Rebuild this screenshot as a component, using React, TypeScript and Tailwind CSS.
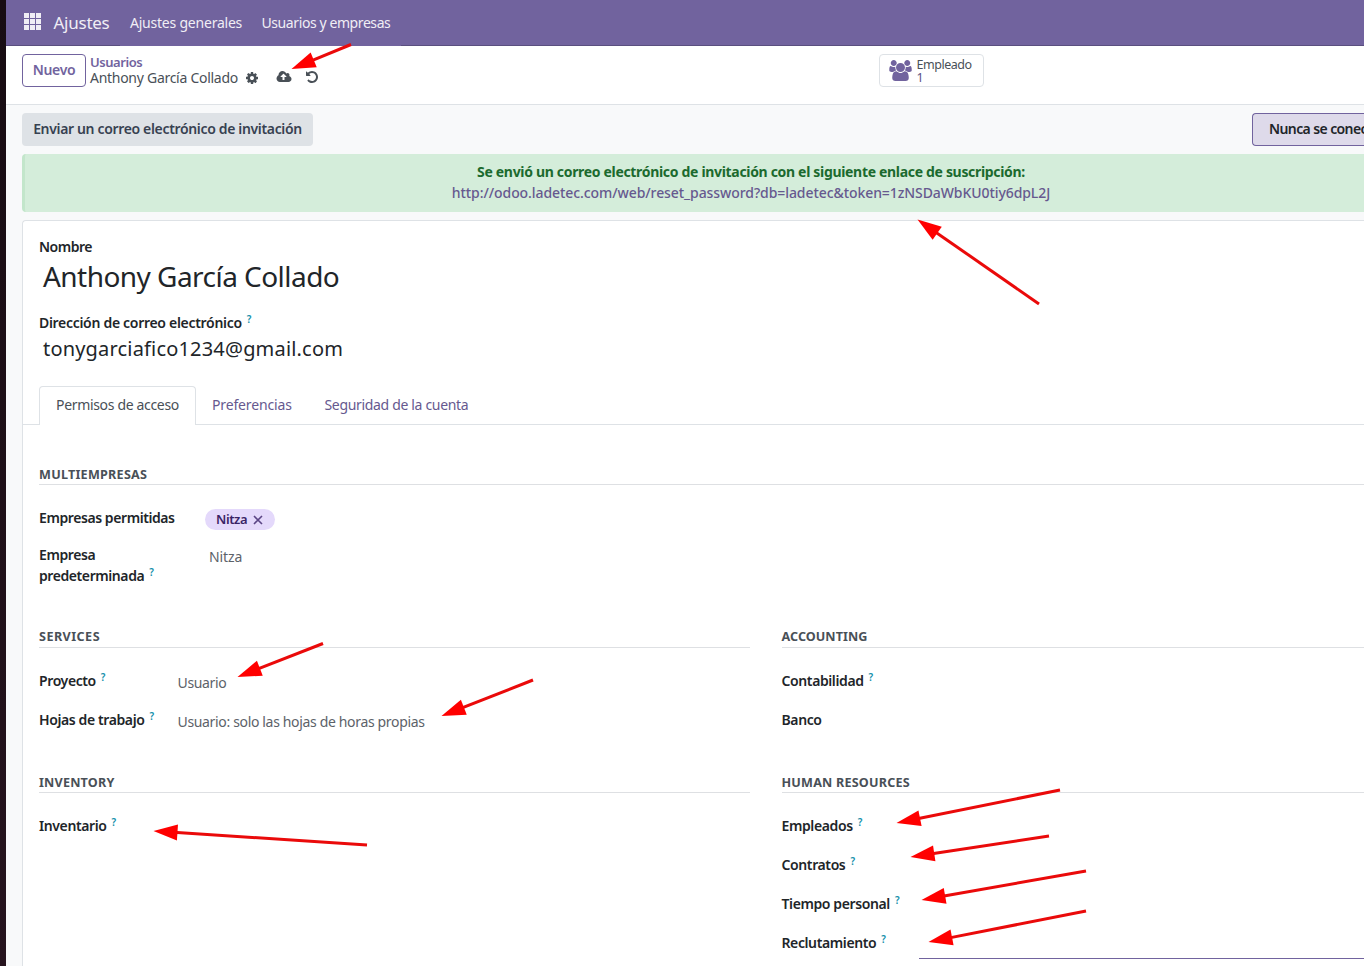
import type { ReactNode } from "react";

const PATHS = {
  users:
    "M593 896q-162 5-265 128h-134q-82 0-138-40.5t-56-118.5q0-353 124-353 6 0 43.5 21t97.5 42.5 119 21.5q67 0 133-23-5 37-5 66 0 139 81 256zm1071 637q0 120-73 189.5t-194 69.5h-874q-121 0-194-69.5t-73-189.5q0-53 3.5-103.5t14-109 26.5-108.5 43-97.5 62-81 85.5-53.5 111.5-20q10 0 43 21.5t73 48 107 48 135 21.5 135-21.5 107-48 73-48 43-21.5q61 0 111.5 20t85.5 53.5 62 81 43 97.5 26.5 108.5 14 109 3.5 103.5zm-1024-1277q0 106-75 181t-181 75-181-75-75-181 75-181 181-75 181 75 75 181zm704 384q0 159-112.5 271.5t-271.5 112.5-271.5-112.5-112.5-271.5 112.5-271.5 271.5-112.5 271.5 112.5 112.5 271.5zm576 225q0 78-56 118.5t-138 40.5h-134q-103-123-265-128 81-117 81-256 0-29-5-66 66 23 133 23 59 0 119-21.5t97.5-42.5 43.5-21q124 0 124 353zm-128-609q0 106-75 181t-181 75-181-75-75-181 75-181 181-75 181 75 75 181z",
  cog: "M1152 896q0-106-75-181t-181-75-181 75-75 181 75 181 181 75 181-75 75-181zm512-109v222q0 12-8 23t-20 13l-185 28q-19 54-39 91 35 50 107 138 10 12 10 25t-9 23q-27 37-99 108t-94 71q-12 0-26-9l-138-108q-44 23-91 38-16 136-29 186-7 28-36 28h-222q-14 0-24.5-8.5t-11.5-21.5l-28-184q-49-16-90-37l-141 107q-10 9-25 9-14 0-25-11-126-114-165-168-7-10-7-23 0-12 8-23 15-21 51-66.5t54-70.5q-27-50-41-99l-183-27q-13-2-21-12.5t-8-23.5v-222q0-12 8-23t19-13l186-28q14-46 39-92-40-57-107-138-10-12-10-24 0-10 9-23 26-36 98.5-107.5t94.5-71.5q13 0 26 10l138 107q44-23 91-38 16-136 29-186 7-28 36-28h222q14 0 24.5 8.5t11.5 21.5l28 184q49 16 90 37l142-107q9-9 24-9 13 0 25 10 129 119 165 170 7 8 7 22 0 12-8 23-15 21-51 66.5t-54 70.5q26 50 41 98l183 28q13 2 21 12.5t8 23.5z",
  cloud:
    "M1280 864q0-14-9-23l-352-352q-9-9-23-9t-23 9l-351 351q-10 12-10 24 0 14 9 23t23 9h224v352q0 13 9.5 22.5t22.5 9.5h192q13 0 22.5-9.5t9.5-22.5v-352h224q13 0 22.5-9.5t9.5-22.5zm640 288q0 159-112.5 271.5t-271.5 112.5h-1088q-185 0-316.5-131.5t-131.5-316.5q0-130 70-240t188-165q-2-30-2-43 0-212 150-362t362-150q156 0 285.5 87t188.5 231q71-62 166-62 106 0 181 75t75 181q0 76-41 138 130 31 213.5 135.5t83.5 238.5z",
  undo: "M1664 896q0 156-61 298t-164 245-245 164-298 61q-172 0-327-72.5t-264-204.5q-7-10-6.5-22.5t8.5-20.5l137-138q10-9 25-9 16 2 23 12 73 95 179 147t225 52q104 0 198.5-40.5t163.5-109.5 109.5-163.5 40.5-198.5-40.5-198.5-109.5-163.5-163.5-109.5-198.5-40.5q-98 0-188 35.5t-160 101.5l137 138q31 30 14 69-17 40-59 40h-448q-26 0-45-19t-19-45v-448q0-42 40-59 39-17 69 14l130 129q107-101 244.5-156.5t284.5-55.5q156 0 298 61t245 164 164 245 61 298z",
};

function Icon({ name, width = 1792, className }: { name: keyof typeof PATHS; width?: number; className: string }) {
  return (
    <svg viewBox={`0 0 ${width} 1792`} fill="currentColor" className={`shrink-0 ${className}`}>
      <path d={PATHS[name]} />
    </svg>
  );
}

function Help() {
  return <sup className="relative -top-[5px] ml-[5px] align-baseline text-[10px] leading-none font-semibold text-[#1490ab]">?</sup>;
}

function Heading({ children, className = "leading-[18px] tracking-[0.2px]" }: { children: ReactNode; className?: string }) {
  return (
    <h2 className={`h-[20px] border-b border-[#dee0e3] text-[12.6px] font-bold text-[#495057] ${className}`}>
      {children}
    </h2>
  );
}

function Field({ label, help, children }: { label: string; help?: boolean; children?: ReactNode }) {
  return (
    <div className="flex h-[39px]">
      <div className="w-[138.5px] shrink-0 text-[14px] leading-[21px] font-semibold tracking-[-0.39px] whitespace-nowrap text-[#212529]">
        {label}
        {help && <Help />}
      </div>
      <div className="pt-[2px] text-[14px] leading-[21px] tracking-[-0.34px] whitespace-nowrap text-[#5c6269]">{children}</div>
    </div>
  );
}

const ARROWS = [
  [291.5, 69, 351, 44.5],
  [917.5, 219.5, 1039, 304],
  [237.5, 677, 323, 643.5],
  [441.5, 716, 533, 680],
  [153.5, 831, 367, 845],
  [896.5, 823, 1060, 790],
  [910.5, 857, 1049, 836],
  [921.5, 900, 1086, 871],
  [928.5, 942, 1086, 911],
];

function Arrows() {
  return (
    <svg className="pointer-events-none absolute inset-0 h-[966px] w-[1364px]" viewBox="0 0 1364 966">
      {ARROWS.map(([x, y, tx, ty]) => {
        const angle = (Math.atan2(ty - y, tx - x) * 180) / Math.PI;
        const length = Math.hypot(tx - x, ty - y);
        return (
          <g key={`${x}-${y}`} transform={`translate(${x} ${y}) rotate(${angle})`}>
            <path d={`M20 0H${length}`} stroke="#ea0a0a" strokeWidth="3" />
            <path d="M0 0L24 -8V8Z" fill="#ff0000" />
          </g>
        );
      })}
    </svg>
  );
}

export default function App() {
  return (
    <div className="relative flex h-[966px] w-[1364px] overflow-hidden bg-[#f8f9fa] font-['Noto_Sans',sans-serif] text-[14px] text-[#212529]">
      <div className="w-[6px] shrink-0 bg-linear-to-b from-[#170c12] to-[#26141e]" />
      <div className="min-w-0 flex-1">
        <header className="flex h-[46px] flex-col bg-[#71639e] whitespace-nowrap text-[#f0eef5]">
          <div className="flex h-[45px] items-center pl-[18px]">
            <svg viewBox="0 0 17 17" className="mb-[2px] h-[17px] w-[17px]" fill="currentColor">
              {[0, 6, 12].map((y) => [0, 6, 12].map((x) => <rect key={`${x}${y}`} x={x} y={y} width="5" height="5" />))}
            </svg>
            <span className="ml-[12.5px] w-[76.5px] text-[17px] tracking-[-0.25px]">Ajustes</span>
            <span className="w-[131.5px] tracking-[-0.22px]">Ajustes generales</span>
            <span className="tracking-[-0.41px]">Usuarios y empresas</span>
          </div>
          <div className="flex h-px justify-between">
            <div className="w-[114px] bg-[#5a4f7f]" />
            <div className="w-[963px] bg-[#5a4f7f]" />
          </div>
        </header>

        <section className="flex h-[59px] items-start border-b border-[#dee2e6] bg-white pt-[8px] pl-[16px] whitespace-nowrap">
          <button className="flex h-[33px] w-[64px] items-center justify-center rounded-[4px] border border-[#71639e] pb-[2px] font-semibold tracking-[-0.35px] text-[#71639e]">
            Nuevo
          </button>
          <div className="ml-[4px] w-[155px]">
            <div className="text-[13px] leading-[16px] font-semibold tracking-[-0.45px] text-[#71639e]">Usuarios</div>
            <div className="text-[14px] leading-[16px] tracking-[-0.28px] text-[#495057]">Anthony García Collado</div>
          </div>
          <div className="flex pt-[16px] text-[#495057]">
            <Icon name="cog" className="mt-px h-[14px] w-[14px]" />
            <Icon name="cloud" width={1920} className="ml-[17px] h-[14px] w-[16px]" />
            <Icon name="undo" className="ml-[13px] h-[14px] w-[14px]" />
          </div>
          <button className="ml-[560px] flex h-[33px] w-[105px] items-center rounded-[4px] border border-[#dee2e6] pl-[9px] text-left">
            <Icon name="users" width={1920} className="h-[21px] w-[23px] text-[#71639e]" />
            <span className="ml-[4.5px] flex flex-col text-[12.5px] leading-[13px] tracking-[-0.46px] text-[#495057]">
              <span>Empleado</span>
              <span className="text-[#5c5285]">1</span>
            </span>
          </button>
        </section>

        <section className="pl-[16px]">
          <div className="flex h-[49px] justify-between pt-[8px] whitespace-nowrap">
            <button className="h-[33px] w-[291px] rounded-[4px] bg-[#dee2e6] pb-[2px] font-semibold tracking-[-0.34px] text-[#374151]">
              Enviar un correo electrónico de invitación
            </button>
            <div className="h-[33px] w-[112px] overflow-hidden rounded-l-[4px] border border-r-0 border-[#71639e] bg-[#dedaea] pl-[16px] leading-[29px] font-semibold tracking-[-0.6px] text-[#212529]">
              Nunca se conectó
            </div>
          </div>
          <div className="flex h-[58px] flex-col items-center rounded-l-[4px] border-l-[3px] border-[#c3e6cb] bg-[#d4edda] pt-[7px] leading-[21px]">
            <div className="ml-[113px] font-bold tracking-[-0.32px] text-[#1b6a2e]">
              Se envió un correo electrónico de invitación con el siguiente enlace de suscripción:
            </div>
            <div className="ml-[113px] font-medium tracking-[-0.08px] text-[#66598f]">
              http://odoo.ladetec.com/web/reset_password?db=ladetec&amp;token=1zNSDaWbKU0tiy6dpL2J
            </div>
          </div>

          <div className="mt-[8px] h-[746px] rounded-tl-[4px] border-t border-l border-[#dee2e6] bg-white">
            <div className="pl-[16px]">
              <div className="pt-[15px] leading-[21px] font-semibold tracking-[-0.5px]">Nombre</div>
              <div className="h-[55px] pl-[4px] text-[28px] leading-[38px] tracking-[-0.54px]">Anthony García Collado</div>
              <div className="leading-[21px] font-semibold tracking-[-0.3px]">
                Dirección de correo electrónico
                <Help />
              </div>
              <div className="h-[53px] pl-[4px] text-[20px] leading-[31px] tracking-[0.18px]">tonygarciafico1234@gmail.com</div>
            </div>

            <nav className="flex h-[39px] border-b border-[#dee2e6] pl-[16px] leading-[37px] tracking-[-0.33px] whitespace-nowrap text-[#66598f]">
              <div className="h-[39px] w-[157px] rounded-t-[4px] border border-b-0 border-[#dee2e6] bg-white pl-[16px] leading-[35px] text-[#495057]">
                Permisos de acceso
              </div>
              <div className="w-[112.5px] pl-[16px] tracking-[-0.15px]">Preferencias</div>
              <div className="pl-[16px]">Seguridad de la cuenta</div>
            </nav>

            <div className="pt-[40px] pl-[16px]">
              <Heading className="pt-px leading-[18px] tracking-[0.25px]">MULTIEMPRESAS</Heading>
              <div className="flex pt-[22px]">
                <div className="w-[166px] leading-[21px] font-semibold tracking-[-0.42px]">
                  <div className="h-[37px]">Empresas permitidas</div>
                  <div>
                    Empresa
                    <br />
                    predeterminada
                    <Help />
                  </div>
                </div>
                <div>
                  <div className="mt-[2px] flex h-[21px] w-[70px] items-center rounded-full bg-[#e4d9fb] pl-[11px] text-[13px] font-semibold tracking-[-0.4px] text-[#3a2466]">
                    <span className="w-[31px]">Nitza</span>
                    <svg viewBox="0 0 10 10" className="ml-[6px] h-[10px] w-[10px]" stroke="#5b4585" strokeWidth="1.6">
                      <path d="M1 1L9 9M9 1L1 9" />
                    </svg>
                  </div>
                  <div className="mt-[16px] pl-[4px] leading-[21px] tracking-[-0.1px] text-[#5c6269]">Nitza</div>
                </div>
              </div>
            </div>

            <div className="grid grid-cols-[711px_711px] gap-x-[31.5px] pt-[42px] pl-[16px]">
              <div className="h-[145px]">
                <Heading className="leading-[18px] tracking-[0.45px]">SERVICES</Heading>
                <div className="pt-[22px]">
                  <Field label="Proyecto" help>Usuario</Field>
                  <Field label="Hojas de trabajo" help>Usuario: solo las hojas de horas propias</Field>
                </div>
              </div>
              <div>
                <Heading className="leading-[18px] tracking-[0.05px]">ACCOUNTING</Heading>
                <div className="pt-[22px]">
                  <Field label="Contabilidad" help />
                  <Field label="Banco" />
                </div>
              </div>
              <div>
                <Heading className="leading-[20px] tracking-[0.2px]">INVENTORY</Heading>
                <div className="pt-[22px]">
                  <Field label="Inventario" help />
                </div>
              </div>
              <div>
                <Heading className="leading-[20px] tracking-[0.2px]">HUMAN RESOURCES</Heading>
                <div className="pt-[22px]">
                  <Field label="Empleados" help />
                  <Field label="Contratos" help />
                  <Field label="Tiempo personal" help />
                  <Field label="Reclutamiento" help>
                    <div className="-ml-px h-[25px] w-[570px] border-b border-[#71639e]" />
                  </Field>
                </div>
              </div>
            </div>
          </div>
        </section>
      </div>
      <Arrows />
    </div>
  );
}
